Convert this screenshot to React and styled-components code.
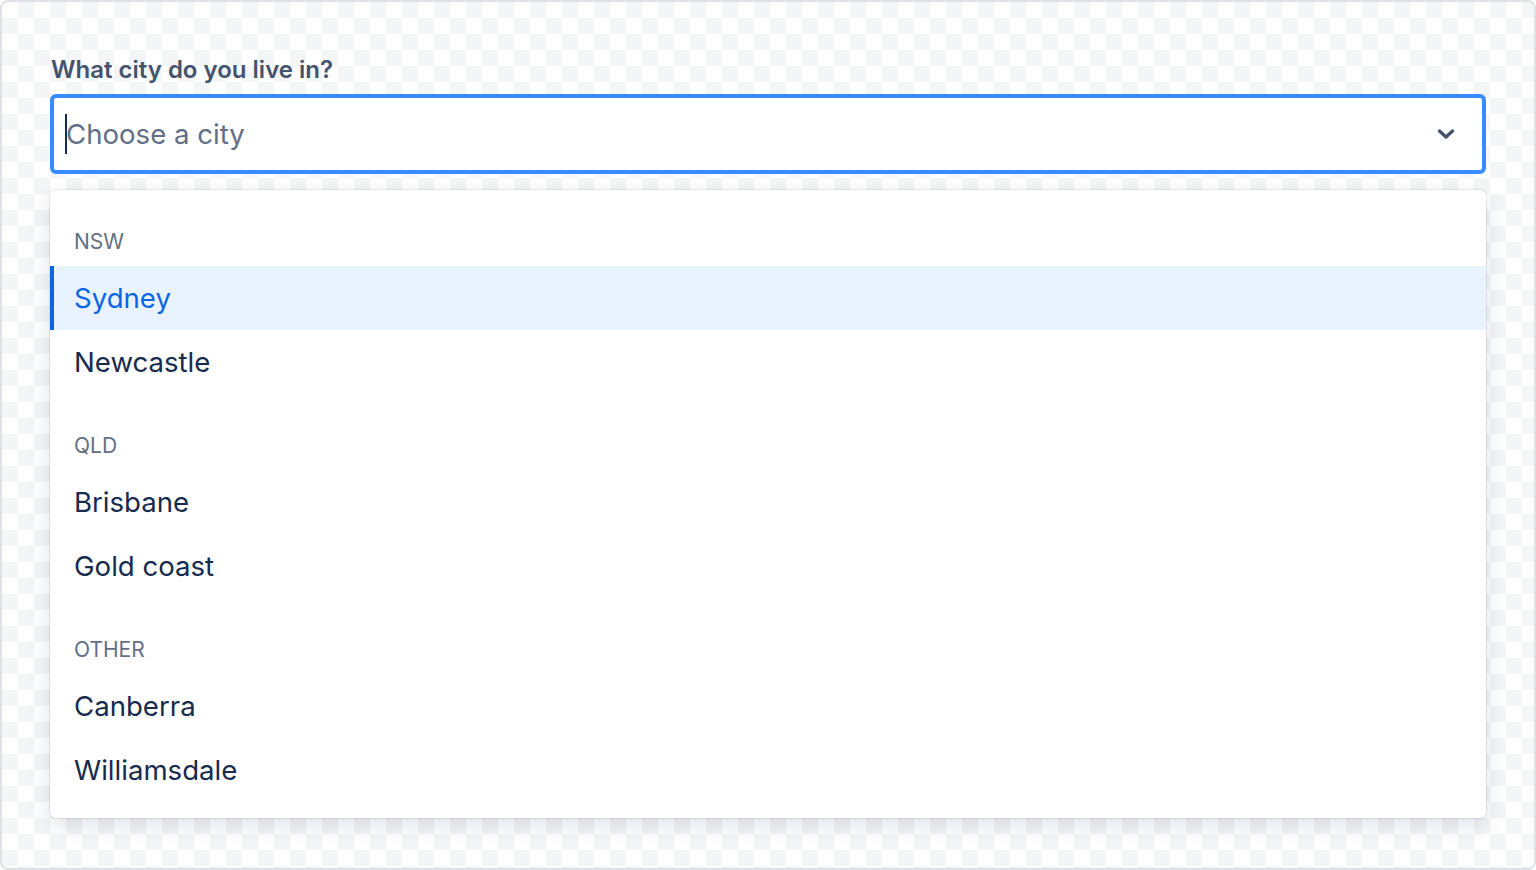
import React from "react";
import styled, { createGlobalStyle } from "styled-components";

const GlobalStyle = createGlobalStyle`
  html, body {
    margin: 0;
    padding: 0;
    background: #ffffff;
  }
  * {
    box-sizing: border-box;
  }
`;

const Frame = styled.div`
  height: 870px;
  border: 2px solid #dfe1e6;
  border-radius: 8px;
  padding: 52px 48px 0;
  font-family: Inter, "Noto Sans", sans-serif;
  background: repeating-conic-gradient(#f4f5f6 0 25%, #ffffff 0 50%) 0 0 / 32px 32px;
  overflow: hidden;
`;

const Label = styled.label`
  display: block;
  font-size: 24px;
  line-height: 32px;
  font-weight: 600;
  color: #44546f;
  margin: 0 0 8px 1px;
`;

const Control = styled.div`
  height: 80px;
  display: flex;
  align-items: center;
  background: #ffffff;
  border: 4px solid #388bff;
  border-radius: 6px;
  padding: 0 26px 0 12px;
`;

const ValueArea = styled.div`
  flex: 1;
  display: flex;
  align-items: center;
  position: relative;
`;

const Caret = styled.span`
  position: absolute;
  left: -1px;
  top: 50%;
  width: 2px;
  height: 40px;
  margin-top: -20px;
  background: #172b4d;
`;

const Placeholder = styled.span`
  font-size: 27.6px;
  color: #626f86;
  line-height: 40px;
`;

const Indicator = styled.svg`
  width: 20px;
  height: 20px;
  display: block;
`;

const Menu = styled.div`
  margin-top: 16px;
  background: #ffffff;
  border-radius: 6px;
  padding: 8px 0;
  box-shadow: 0 0 0 1px rgba(9, 30, 66, 0.08), 0 8px 22px rgba(9, 30, 66, 0.13);
`;

const Group = styled.div`
  padding: 8px 0;
`;

const GroupHeading = styled.div`
  padding: 24px 24px 12px;
  font-size: 21px;
  line-height: 24px;
  color: #626f86;
  text-transform: uppercase;
`;

const Option = styled.div`
  height: 64px;
  display: flex;
  align-items: center;
  padding: 0 24px;
  font-size: 27.6px;
  color: ${(p) => (p.$selected ? "#0c66e4" : "#172b4d")};
  background: ${(p) => (p.$selected ? "#e9f2ff" : "transparent")};
  box-shadow: ${(p) => (p.$selected ? "inset 4px 0 0 #0c66e4" : "none")};
`;

const groups = [
  { label: "NSW", options: ["Sydney", "Newcastle"] },
  { label: "QLD", options: ["Brisbane", "Gold coast"] },
  { label: "Other", options: ["Canberra", "Williamsdale"] },
];

const ChevronDown = () => (
  <Indicator viewBox="0 0 20 20">
    <path
      d="M3.5 7 L10 13 L16.5 7"
      fill="none"
      stroke="#44546f"
      strokeWidth="3.4"
      strokeLinecap="round"
      strokeLinejoin="round"
    />
  </Indicator>
);

const App = () => {
  return (
    <>
      <GlobalStyle />
      <Frame>
        <Label>What city do you live in?</Label>
        <Control>
          <ValueArea>
            <Caret />
            <Placeholder>Choose a city</Placeholder>
          </ValueArea>
          <ChevronDown />
        </Control>
        <Menu>
          {groups.map((group) => (
            <Group key={group.label}>
              <GroupHeading>{group.label}</GroupHeading>
              {group.options.map((opt) => (
                <Option key={opt} $selected={opt === "Sydney"}>
                  {opt}
                </Option>
              ))}
            </Group>
          ))}
        </Menu>
      </Frame>
    </>
  );
};

export default App;
